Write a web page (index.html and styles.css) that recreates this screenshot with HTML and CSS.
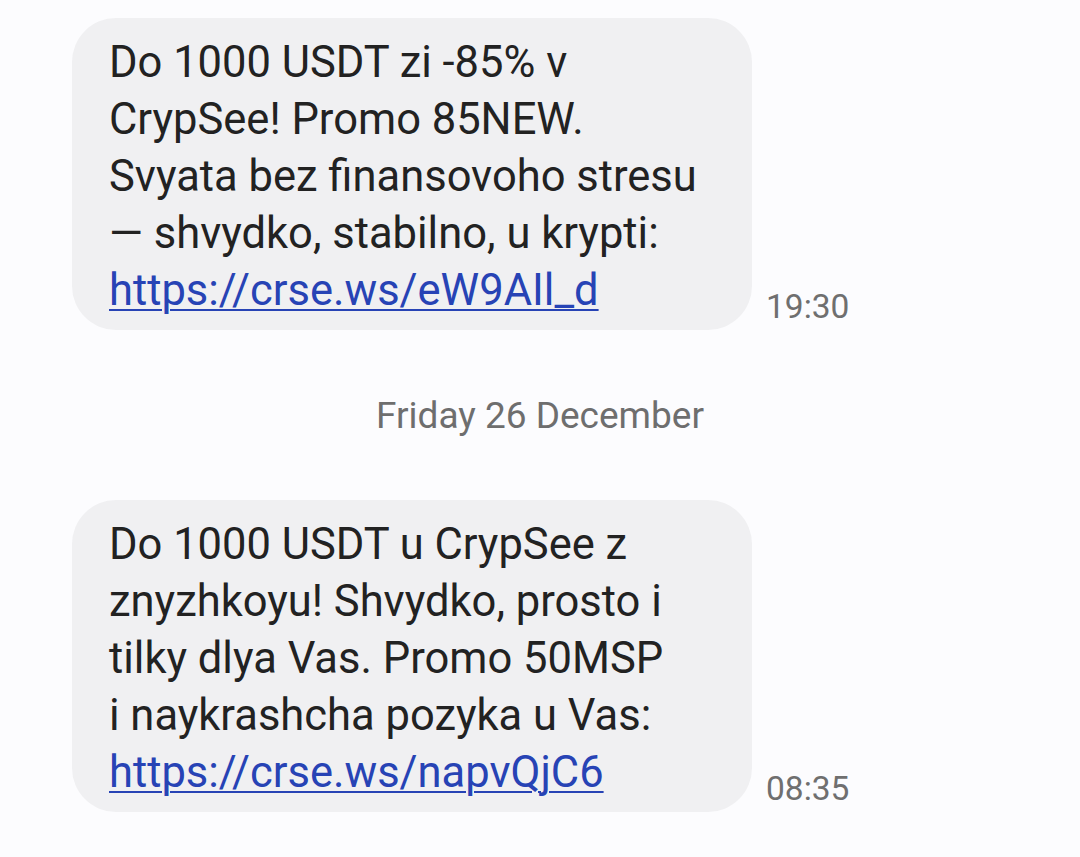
FILE: index.html
```html
<!DOCTYPE html>
<html>
<head>
<meta charset="utf-8">
<link rel="stylesheet" href="styles.css">
</head>
<body>
<div class="thread">
  <div class="row">
    <div class="bubble">
      Do 1000 USDT zi -85% v<br>
      CrypSee! Promo 85NEW.<br>
      Svyata bez finansovoho stresu<br>
      — shvydko, stabilno, u krypti:<br>
      <a class="link" href="#">https://crse.ws/eW9AIl_d</a>
    </div>
    <div class="time">19:30</div>
  </div>
  <div class="date">Friday 26 December</div>
  <div class="row">
    <div class="bubble">
      Do 1000 USDT u CrypSee z<br>
      znyzhkoyu! Shvydko, prosto i<br>
      tilky dlya Vas. Promo 50MSP<br>
      i naykrashcha pozyka u Vas:<br>
      <a class="link" href="#">https://crse.ws/napvQjC6</a>
    </div>
    <div class="time">08:35</div>
  </div>
</div>
</body>
</html>
```
FILE: styles.css
```css
html, body {
  margin: 0;
  padding: 0;
  background: #fcfcfe;
}
body {
  font-family: Roboto, "Noto Sans", sans-serif;
  width: 1080px;
  height: 857px;
  overflow: hidden;
}
.thread {
  display: flex;
  flex-direction: column;
  padding: 18px 0 0 72px;
}
.row {
  display: flex;
  align-items: flex-end;
  gap: 14px;
}
.bubble {
  width: 680px;
  box-sizing: border-box;
  background: #f0f0f2;
  border-radius: 44px;
  padding: 16px 30px 11px 37px;
  font-size: 43.5px;
  line-height: 57px;
  color: #222;
}
.link {
  color: #2743b5;
  text-decoration: underline;
  text-decoration-thickness: 2px;
  text-underline-offset: 4px;
}
.time {
  font-size: 33.5px;
  line-height: 40px;
  color: #6f6f6f;
  padding-bottom: 3px;
}
.date {
  text-align: center;
  margin-left: -72px;
  font-size: 37px;
  color: #6e6e6e;
  padding: 64px 0 62px;
  line-height: 44px;
}
```
